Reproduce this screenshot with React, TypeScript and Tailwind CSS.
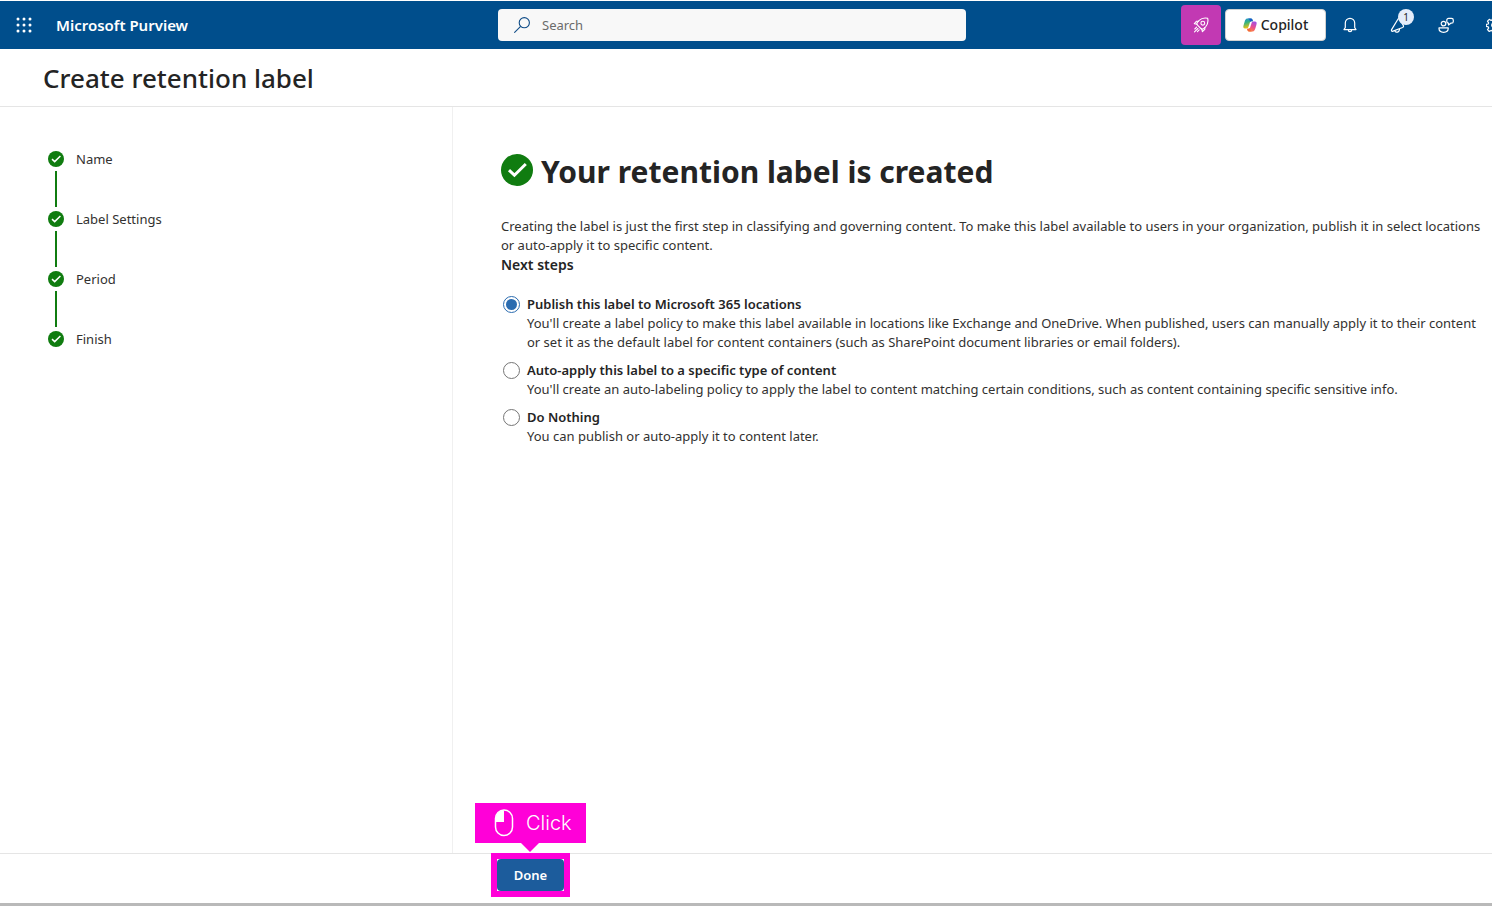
import React, { useState } from "react";

const steps = ["Name", "Label Settings", "Period", "Finish"];

const options = [
  {
    id: "publish",
    title: "Publish this label to Microsoft 365 locations",
    lines: [
      "You'll create a label policy to make this label available in locations like Exchange and OneDrive. When published, users can manually apply it to their content",
      "or set it as the default label for content containers (such as SharePoint document libraries or email folders).",
    ],
  },
  {
    id: "auto",
    title: "Auto-apply this label to a specific type of content",
    lines: [
      "You'll create an auto-labeling policy to apply the label to content matching certain conditions, such as content containing specific sensitive info.",
    ],
  },
  {
    id: "nothing",
    title: "Do Nothing",
    lines: ["You can publish or auto-apply it to content later."],
  },
];

function CheckCircle({ className }: { className: string }) {
  return (
    <svg viewBox="0 0 32 32" className={className} aria-hidden="true">
      <circle cx="16" cy="16" r="16" fill="#107c10" />
      <path d="M8 16.2 13.4 21.2 24.8 10" fill="none" stroke="#fff" strokeWidth="3" />
    </svg>
  );
}

function WaffleIcon() {
  const dots = [2, 8, 14];
  return (
    <svg viewBox="0 0 16 16" className="size-4" fill="#fff" aria-hidden="true">
      {dots.map((y) => dots.map((x) => <circle key={`${x}-${y}`} cx={x} cy={y} r="1.5" />))}
    </svg>
  );
}

function SearchIcon() {
  return (
    <svg viewBox="0 0 16 16" className="size-4 shrink-0" fill="none" stroke="#0f4c87" strokeWidth="1.1" aria-hidden="true">
      <circle cx="10.3" cy="5.7" r="5.1" />
      <path d="M6.6 9.400.3 15.7" />
    </svg>
  );
}

function RocketIcon() {
  return (
    <svg viewBox="0 0 16 16" className="size-4" fill="none" stroke="#fff" strokeWidth="1.1" strokeLinecap="round" strokeLinejoin="round" aria-hidden="true">
      <path d="M14.7 1.300C11.200.6 8.300 1.300 6.200 3.400L4.600 5.100c-.9 1-.9 2.300-.1 3.100l3.300 3.300c.8.8 2.100.8 3.100-.1l1.700-1.600c2.100-2.100 2.800-5 2.100-8.500Z" />
      <circle cx="9.800" cy="6.200" r="1.900" />
      <path d="M5.400 4.200H3.600L1.300 6.600l2.800.7M11.800 10.600v1.800l-2.400 2.300-.7-2.800" />
      <path d="M3.600 10.200 1.800 12M4.900 11.500 1.500 14.900M6.200 12.800l-1.800 1.800" />
    </svg>
  );
}

function CopilotIcon() {
  return (
    <svg viewBox="0 0 24 24" className="size-[14px]" aria-hidden="true">
      <defs>
        <linearGradient id="cpA" x1="0" y1="0" x2="0.3" y2="1">
          <stop offset="0" stopColor="#1b8fdc" />
          <stop offset="0.45" stopColor="#35b37e" />
          <stop offset="1" stopColor="#f4c20d" />
        </linearGradient>
        <linearGradient id="cpB" x1="0.6" y1="0" x2="0.2" y2="1">
          <stop offset="0" stopColor="#a650e0" />
          <stop offset="0.5" stopColor="#ec4f8c" />
          <stop offset="1" stopColor="#ff8a3c" />
        </linearGradient>
      </defs>
      <path d="M17 5.500 16.300 3.200A3.200 3.200 0 0 0 13.200 1H7.300C4.800 1 3.700 3.400 2.900 6L1 12.300C.1 15.400.2 18 3.800 18h2.500c1.500 0 2.500-1 3-2.500L11.800 7.700C12.300 6.200 13.200 5.500 14.500 5.500Z" fill="url(#cpA)" />
      <path d="M8.500 1h4.700a3.200 3.200 0 0 1 3.100 2.200L17 5.500h-2.500c-1.200 0-1.900.4-2.400 1.300C11.400 4 10.800 1.500 8.500 1Z" fill="#1759c9" />
      <path d="m7 18.500.7 2.300A3.200 3.200 0 0 0 10.800 23h5.900c2.500 0 3.600-2.400 4.400-5l1.900-6.300c.9-3.100.8-5.700-2.800-5.700h-2.500c-1.500 0-2.500 1-3 2.500l-2.500 7.800c-.5 1.500-1.400 2.200-2.700 2.200Z" fill="url(#cpB)" />
      <path d="m7 18.500.7 2.300A3.200 3.200 0 0 0 10.800 23h4.700c-2.300-.5-2.900-3-3.600-5.800-.5.900-1.200 1.300-2.400 1.300Z" fill="#f26b3a" />
    </svg>
  );
}

function BellIcon() {
  return (
    <svg viewBox="0 0 16 16" className="size-4" fill="none" stroke="#fff" strokeWidth="1.2" strokeLinejoin="round" aria-hidden="true">
      <path d="M3.300 10.500V6a4.700 4.700 0 0 1 9.400 0v4.500l1.300 2.100H2Z" />
      <path d="M6.300 12.700a1.700 1.900 0 0 0 3.400 0" />
    </svg>
  );
}

function MegaphoneIcon() {
  return (
    <svg viewBox="0 0 16 16" className="size-4" fill="none" stroke="#fff" strokeWidth="1.2" strokeLinejoin="round" aria-hidden="true">
      <path d="M8.200 1.800 1.600 12.600c-.4.700 0 1.700.8 1.800l10.200-3.900c.9-.4 1.200-1.300.7-2.100L9.600 2c-.4-.6-1-.7-1.400-.2Z" />
      <path d="M4.800 13.600c.5 1.500 2 2 3.300 1.300 1-.5 1.500-1.500 1.300-3" />
    </svg>
  );
}

function FeedbackIcon() {
  return (
    <svg viewBox="0 0 16 16" className="size-4" fill="none" stroke="#fff" strokeWidth="1.2" strokeLinejoin="round" aria-hidden="true">
      <circle cx="5.500" cy="6.600" r="2.300" />
      <path d="M1 10.800h9.200v.8c0 2.300-1.900 3.700-4.600 3.700S1 13.900 1 11.600Z" />
      <path d="M8.800 3.200c0-1.100.7-1.800 1.800-1.800h2.900c1.100 0 1.800.7 1.800 1.800v1.200c0 1.100-.7 1.800-1.800 1.800h-.7L10.500 8V6.200c-1 0-1.700-.6-1.700-1.600Z" />
    </svg>
  );
}

function GearIcon() {
  return (
    <svg viewBox="0 0 16 16" className="size-4" fill="none" stroke="#fff" strokeWidth="1.2" strokeLinejoin="round" aria-hidden="true">
      <path d="M6.700.9h2.600l.4 2 1.200.5L12.700 2.300l1.800 1.900-1.100 1.700.4 1.100 1.900.4v2l-1.900.4-.5 1.200 1.200 1.700-1.800 1.800-1.800-1.100-1.200.5-.4 2H6.700l-.4-2-1.200-.5-1.800 1.100-1.800-1.800L2.700 11l-.5-1.200-1.900-.4v-2L2.200 7l.4-1.100L1.500 4.200l1.800-1.900 1.800 1.100 1.200-.5Z" />
      <circle cx="8" cy="8.300" r="2.300" />
    </svg>
  );
}

function MouseIcon() {
  return (
    <svg viewBox="0 0 20 28" className="h-7 w-5" aria-hidden="true">
      <path d="M10 1.500A8 8 0 0 0 1.500 9.500V13H10Z" fill="#fff" />
      <rect x="1.500" y="1" width="17" height="25.500" rx="8.500" fill="none" stroke="#fff" strokeWidth="1.500" />
    </svg>
  );
}

const iconButton = "flex h-12 w-12 shrink-0 items-center justify-center";

export default function App() {
  const [selected, setSelected] = useState("publish");

  return (
    <div className="flex min-h-screen flex-col overflow-hidden border-b-3 border-[#b9b9b9] bg-white pt-px font-['Noto_Sans','Open_Sans',sans-serif] text-[13px] text-[#323130]">
      <header className="flex h-12 shrink-0 items-center bg-[#004e8c] text-white">
        <div className="flex w-[498px] shrink-0 items-center">
          <button type="button" aria-label="App launcher" className={iconButton}>
            <WaffleIcon />
          </button>
          <span className="pl-2 text-[15px] font-semibold">Microsoft Purview</span>
        </div>
        <label className="flex h-8 w-[468px] items-center gap-3 rounded bg-[#f8f8f8] px-4">
          <SearchIcon />
          <input
            type="search"
            aria-label="Search"
            placeholder="Search"
            className="w-full bg-transparent pt-0.5 text-[13px] text-[#323130] outline-none placeholder:text-[#6b6b6b]"
          />
        </label>
        <div className="-mr-[26px] ml-auto flex shrink-0 items-center">
          <button type="button" aria-label="What's new" className="mr-1 flex size-10 items-center justify-center rounded bg-[#c239b3]">
            <RocketIcon />
          </button>
          <button type="button" className="flex h-8 w-[101px] items-center justify-center gap-1 rounded border border-[#d1d1d1] bg-white text-sm font-medium text-[#242424]">
            <CopilotIcon />
            Copilot
          </button>
          <button type="button" aria-label="Notifications" className={iconButton}>
            <BellIcon />
          </button>
          <button type="button" aria-label="Announcements" className={`relative ${iconButton}`}>
            <MegaphoneIcon />
            <span className="absolute top-2 right-2 flex size-4 items-center justify-center rounded-full bg-[#e5edfa] text-[10px] leading-none text-[#242424]">1</span>
          </button>
          <button type="button" aria-label="Feedback" className={iconButton}>
            <FeedbackIcon />
          </button>
          <button type="button" aria-label="Settings" className={iconButton}>
            <GearIcon />
          </button>
        </div>
      </header>

      <div className="flex h-[58px] shrink-0 items-center border-b border-[#e5e5e5] px-[43px] pt-0.5">
        <h1 className="text-[26px] font-medium text-[#242424]">Create retention label</h1>
      </div>

      <div className="flex grow">
        <nav aria-label="Steps" className="w-[453px] shrink-0 border-r border-[#f0f0f0] px-12 pt-11">
          <ol>
            {steps.map((step, i) => (
              <li key={step} className="flex h-[60px] gap-3">
                <div className="flex w-4 flex-col items-center gap-1">
                  <CheckCircle className="size-4 shrink-0" />
                  {i < steps.length - 1 && <span className="h-9 w-0.5 bg-[#107c10]" />}
                </div>
                <span className="leading-4">{step}</span>
              </li>
            ))}
          </ol>
        </nav>

        <main className="min-w-0 grow pt-[47px] pl-12 whitespace-nowrap">
          <div className="flex items-start gap-2">
            <CheckCircle className="size-8 shrink-0" />
            <h2 className="text-[30px] leading-9 font-bold text-[#242424]">Your retention label is created</h2>
          </div>
          <p className="mt-[27px] leading-[19px]">
            <span className="block">
              Creating the label is just the first step in classifying and governing content. To make this label available to users in your organization, publish it in select locations
            </span>
            <span className="block">or auto-apply it to specific content.</span>
          </p>
          <h3 id="next-steps" className="text-sm leading-5 font-semibold text-[#242424]">Next steps</h3>
          <fieldset aria-labelledby="next-steps" className="mt-5 flex flex-col gap-[9px] leading-[19px]">
            {options.map((o) => (
              <div key={o.id} className="flex gap-[7px] pl-0.5">
                <input
                  type="radio"
                  name="next"
                  id={o.id}
                  checked={selected === o.id}
                  onChange={() => setSelected(o.id)}
                  className="mt-px size-[17px] shrink-0 appearance-none rounded-full border border-[#767676] bg-white p-0.5 checked:border-[#2b6cb0] checked:bg-[#2b6cb0] checked:bg-clip-content"
                />
                <label htmlFor={o.id} className="block">
                  <span className="block font-semibold text-[#242424]">{o.title}</span>
                  {o.lines.map((line) => (
                    <span key={line} className="block">{line}</span>
                  ))}
                </label>
              </div>
            ))}
          </fieldset>
        </main>
      </div>

      <footer className="h-[50px] shrink-0 border-t border-[#e5e5e5] pt-[5px] pl-[497px]">
        <div className="relative w-[67px]">
          <button type="button" className="h-8 w-full rounded bg-[#1c5c9c] pt-0.5 font-semibold text-white">
            Done
          </button>
          <div className="pointer-events-none absolute -inset-1.5 border-6 border-[#ff00d8]" />
          <div className="pointer-events-none absolute bottom-12 -left-[22px] flex h-10 w-[111px] items-center gap-3 bg-[#ff00d8] pl-[19px] font-['Inter',sans-serif] text-xl font-light text-white">
            <MouseIcon />
            Click
            <svg viewBox="0 0 18 9" className="absolute top-full left-[46px] h-[9px] w-[18px]" aria-hidden="true">
              <path d="M0 0h18L9 9Z" fill="#ff00d8" />
            </svg>
          </div>
        </div>
      </footer>
    </div>
  );
}
